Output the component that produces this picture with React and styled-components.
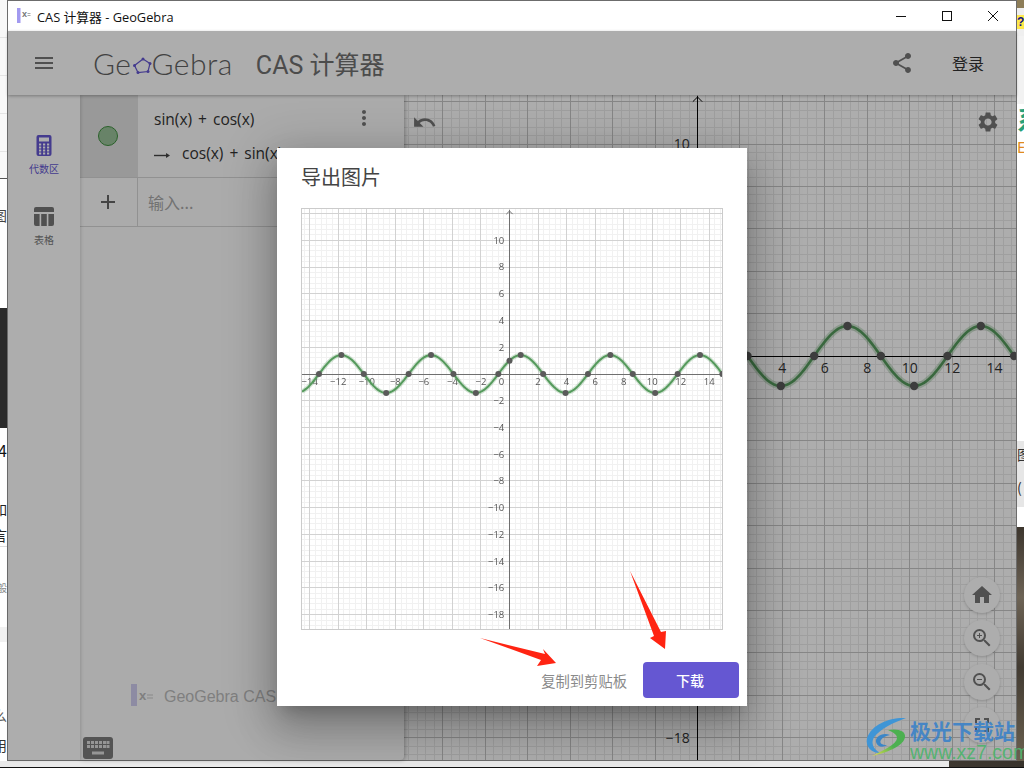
import React from "react";
import styled, { createGlobalStyle } from "styled-components";
import {
  MdAdd,
  MdFullscreen,
  MdHome,
  MdMenu,
  MdMoreVert,
  MdSettings,
  MdShare,
  MdUndo,
  MdZoomIn,
  MdZoomOut,
} from "react-icons/md";

const UI_FONT = `"Open Sans", "Noto Sans CJK SC", sans-serif`;
const CJK_FONT = `"Noto Sans CJK SC", "Open Sans", sans-serif`;

const GlobalStyle = createGlobalStyle`
  html, body {
    margin: 0;
    width: 1024px;
    height: 768px;
    overflow: hidden;
    background: #fff;
    font-family: ${UI_FONT};
  }
  * { box-sizing: border-box; }
`;

const Page = styled.div`
  position: relative;
  width: 1024px;
  height: 768px;
  display: grid;
  grid-template-columns: 7px 1010px 7px;
  grid-template-rows: 761px 7px;
`;

/* what is left of the desktop round the window */
const Strip = styled.div`
  display: flex;
  flex-direction: column;
  overflow: hidden;
  background: #fff;
`;

const StripRow = styled.div`
  flex: ${(p) => (p.$h ? `0 0 ${p.$h}px` : "1")};
  display: flex;
  align-items: center;
  justify-content: ${(p) => (p.$start ? "flex-start" : "flex-end")};
  overflow: hidden;
  white-space: nowrap;
  font-family: ${CJK_FONT};
  font-size: ${(p) => p.$size || 14}px;
  font-weight: ${(p) => p.$weight || 400};
  color: ${(p) => p.$color || "#222"};
  background: ${(p) => p.$bg || "transparent"};
`;

const HelpGlyph = styled.span`
  width: 7px;
  height: 14px;
  background: #ffe94a;
  color: #11118a;
  font: bold 12px/14px "Liberation Sans", sans-serif;
`;

const BottomStrip = styled.div`
  grid-column: 1 / 4;
  display: flex;
  border-bottom: 1px solid #111;
  background: linear-gradient(90deg, #2d2a26, #5c5347 60%, #38332c);
`;

const BottomBar = styled.div`
  width: 949px;
  background: #e9e9e9;
`;

const AppWindow = styled.div`
  display: flex;
  flex-direction: column;
  border: 1px solid #6c6c6c;
  background: #fff;
`;

const TitleBar = styled.div`
  flex: 0 0 30px;
  display: flex;
  align-items: center;
  padding-left: 9px;
  font-family: ${UI_FONT};
  font-size: 12.8px;
  color: #111;
`;

const TitleIcon = styled.svg`
  width: 15px;
  height: 16px;
  margin-right: 5px;
`;

const WindowButtons = styled.div`
  margin-left: auto;
  display: flex;
`;

const WindowButton = styled.svg`
  width: 46px;
  height: 30px;
`;

const AppArea = styled.div`
  position: relative;
  flex: 1;
  display: flex;
  flex-direction: column;
  min-height: 0;
`;

const Header = styled.header`
  position: relative;
  z-index: 3;
  flex: 0 0 64px;
  display: flex;
  align-items: center;
  padding: 0 32px 0 24px;
  background: #fff;
  color: #666;
  box-shadow: 0 1px 3px rgba(0, 0, 0, 0.3);
`;

const Logo = styled.div`
  display: flex;
  align-items: center;
  margin-left: 37px;
  font-family: Lato, "Open Sans", sans-serif;
  font-weight: 300;
  font-size: 30px;
  letter-spacing: 0.5px;
  color: #626262;
`;

const LogoMark = styled.svg`
  width: 20px;
  height: 20px;
  margin: 6px 0 0 0;
`;

const AppName = styled.div`
  margin-left: 23px;
  font-family: Roboto, ${CJK_FONT};
  font-size: 25px;
  color: #707070;
`;

const Login = styled.div`
  margin-left: 38px;
  font-family: ${CJK_FONT};
  font-size: 16px;
  color: #333;
`;

const ShareWrap = styled.div`
  margin-left: auto;
  display: flex;
  color: #777;
`;

const Body = styled.div`
  flex: 1;
  display: flex;
  min-height: 0;
`;

const Sidebar = styled.nav`
  flex: 0 0 72px;
  display: flex;
  flex-direction: column;
  align-items: center;
  padding-top: 40px;
  gap: 31px;
  background: #fff;
  box-shadow: 1px 0 3px rgba(0, 0, 0, 0.15);
  z-index: 2;
`;

const SideTab = styled.div`
  display: flex;
  flex-direction: column;
  align-items: center;
  gap: ${(p) => (p.$active ? 6 : 7)}px;
  font-family: ${CJK_FONT};
  font-size: 10px;
  line-height: 14px;
  color: ${(p) => (p.$active ? "#6557d2" : "#7a7a7a")};
`;

const Panel = styled.section`
  position: relative;
  z-index: 1;
  flex: 0 0 324px;
  display: flex;
  flex-direction: column;
  background: #fcfcfc;
  box-shadow: 1px 0 4px rgba(0, 0, 0, 0.3);
  border-bottom-right-radius: 4px;
`;

const Row = styled.div`
  flex: 0 0 ${(p) => p.$h}px;
  display: flex;
  border-bottom: 1px solid #d6d6d6;
`;

const MarbleCell = styled.div`
  flex: 0 0 58px;
  display: flex;
  align-items: center;
  justify-content: center;
  padding-right: 2px;
  background: ${(p) => (p.$active ? "#e2e2e2" : "transparent")};
  border-right: ${(p) => (p.$active ? "none" : "1px solid #d6d6d6")};
  color: #666;
`;

const Marble = styled.div`
  width: 20px;
  height: 20px;
  border-radius: 50%;
  background: #9ac29a;
  border: 1px solid #3f8f3f;
`;

const Formula = styled.div`
  flex: 1;
  padding: 12px 28px 0 16px;
  display: flex;
  flex-direction: column;
  gap: 10px;
`;

const FormulaLine = styled.div`
  height: 24px;
  display: flex;
  align-items: center;
  white-space: pre;
  font-family: "Open Sans", sans-serif;
  font-size: 15.5px;
  word-spacing: 2px;
  color: #333;
`;

const KebabWrap = styled.div`
  margin-left: auto;
  display: flex;
  color: #777;
  margin-top: -2px;
`;

const OutputArrow = styled.svg`
  width: 18px;
  height: 10px;
  margin: 4px 10px 0 0;
`;

const InputHint = styled.div`
  flex: 1;
  display: flex;
  align-items: center;
  padding-left: 10px;
  font-family: ${CJK_FONT};
  font-size: 16px;
  color: #a8a8a8;
`;

const Credit = styled.div`
  margin-top: auto;
  margin-bottom: 53px;
  padding-left: 51px;
  display: flex;
  align-items: center;
  white-space: nowrap;
  font-family: "Liberation Sans", ${CJK_FONT};
  font-size: 16px;
  color: #bcbcbc;
`;

const CreditIcon = styled.svg`
  width: 24px;
  height: 22px;
  margin-right: 9px;
`;

const KeyboardButton = styled.svg`
  position: absolute;
  left: 3px;
  bottom: 1px;
  width: 30px;
  height: 22px;
`;

const GraphArea = styled.div`
  position: relative;
  flex: 1;
  min-width: 0;
  background: #fff;
  overflow: hidden;
`;

const GraphSvg = styled.svg`
  display: block;
  filter: ${(p) => (p.$soft ? "blur(0.55px)" : "none")};
`;

const GraphTool = styled.div`
  position: absolute;
  display: flex;
  color: #777;
  ${(p) => p.$place}
`;

const ZoomStack = styled.div`
  position: absolute;
  right: 16px;
  bottom: 17px;
  display: flex;
  flex-direction: column;
  gap: 7.5px;
`;

const ZoomButton = styled.div`
  width: 36px;
  height: 36px;
  border-radius: 50%;
  background: #fff;
  color: #777;
  display: flex;
  align-items: center;
  justify-content: center;
  box-shadow: 0 1px 3px rgba(0, 0, 0, 0.2);
`;

const Scrim = styled.div`
  position: absolute;
  inset: 0;
  z-index: 5;
  display: flex;
  justify-content: center;
  align-items: flex-start;
  padding-top: 117px;
  background: rgba(0, 0, 0, 0.32);
`;

const Dialog = styled.div`
  position: relative;
  width: 470px;
  height: 558px;
  padding: 15px 24px 8px;
  background: #fff;
  box-shadow: 0 11px 15px -7px rgba(0, 0, 0, 0.2), 0 24px 38px 3px rgba(0, 0, 0, 0.16),
    0 9px 46px 8px rgba(0, 0, 0, 0.18);
`;

const DialogTitle = styled.h2`
  margin: 0 0 17px;
  height: 28px;
  font-family: ${CJK_FONT};
  font-size: 20px;
  line-height: 28px;
  font-weight: 400;
  color: #444;
`;

const ExportImage = styled.div`
  width: 422px;
  height: 422px;
  border: 1px solid #cbcbcb;
  overflow: hidden;
`;

const DialogActions = styled.div`
  margin: 32px -16px 0 0;
  display: flex;
  justify-content: flex-end;
  align-items: center;
  gap: 16px;
  font-family: ${CJK_FONT};
  font-size: 14px;
`;

const TextAction = styled.span`
  color: #8a8a8a;
  font-size: 14.3px;
`;

const PrimaryAction = styled.span`
  width: 96px;
  height: 36px;
  display: flex;
  align-items: center;
  justify-content: center;
  padding-right: 2px;
  border-radius: 4px;
  background: #6557d2;
  color: #fff;
  font-weight: 500;
`;

const Arrows = styled.svg`
  position: absolute;
  left: 203px;
  top: 423px;
  width: 190px;
  height: 100px;
  overflow: visible;
`;

const Watermark = styled.div`
  position: absolute;
  z-index: 9;
  left: 864px;
  top: 716px;
  display: flex;
  gap: 2px;
`;

const SwirlMark = styled.svg`
  width: 44px;
  height: 42px;
`;

const WatermarkText = styled.div`
  display: flex;
  flex-direction: column;
`;

const WatermarkTitle = styled.div`
  font-family: ${CJK_FONT};
  font-size: 21px;
  line-height: 28px;
  font-weight: 700;
  color: rgba(60, 130, 200, 0.92);
`;

const WatermarkUrl = styled.div`
  font-family: "Liberation Sans", sans-serif;
  font-size: 19.5px;
  line-height: 17px;
  color: rgba(80, 180, 110, 0.95);
`;

const LEFT_ROWS = [
  { h: 178, bg: "repeating-linear-gradient(180deg, #f8f8f8 0 37px, #e4e4e4 37px 38px)" },
  { h: 1, bg: "#555" },
  { h: 25 },
  { h: 22, text: "图", color: "#444" },
  { h: 82 },
  { h: 120, bg: "#2a2a2a" },
  { h: 10 },
  { h: 24, text: "4", size: 16, color: "#111" },
  { h: 36 },
  { h: 22, text: "如" },
  { h: 4 },
  { h: 22, text: "言" },
  { h: 1, bg: "#ddd" },
  { h: 32 },
  { h: 16, text: "般", size: 10, color: "#888" },
  { h: 32 },
  { h: 15, bg: "#f1f1f1" },
  { h: 62 },
  { h: 22, text: "么", color: "#555" },
  { h: 8 },
  { h: 22, text: "用", color: "#333" },
  {},
];

const RIGHT_ROWS = [
  { h: 8, bg: "#8d7d58" },
  { h: 28, bg: "#efefef", start: true, help: true },
  { h: 68, bg: "#f2f2f2" },
  { h: 28, start: true, text: "系", size: 26, weight: 700, color: "#28a17a" },
  { h: 6 },
  { h: 16, start: true, text: "E", size: 15, color: "#e08a20" },
  { h: 287 },
  { h: 26, bg: "#e6e6e6", start: true, text: "图", color: "#333" },
  { h: 10, bg: "#e6e6e6" },
  { h: 20, bg: "#e6e6e6", start: true, text: "(", color: "#333" },
  { h: 10, bg: "#e6e6e6" },
  { h: 20 },
  { bg: "linear-gradient(180deg, #3d362e, #6d6355 30%, #423b32 60%, #6a604f)" },
];

const CRITICAL = [];
for (let k = -6; k <= 5; k++) {
  CRITICAL.push({ x: -Math.PI / 4 + k * Math.PI, y: 0 });
  CRITICAL.push({ x: Math.PI / 4 + k * Math.PI, y: k % 2 === 0 ? Math.SQRT2 : -Math.SQRT2 });
}

const range = (from, to, step) => {
  const out = [];
  for (let v = from; v <= to + 1e-6; v += step) out.push(Math.round(v * 10) / 10);
  return out;
};

const minus = (n) => (n < 0 ? `\u2212${-n}` : `${n}`);

// one coordinate plane with sin(x) + cos(x) on it, used for the view and for the exported picture
function Plane({
  width, height, x0, y0, ux, uy, font, labelDy, dot, line, halo, core, minor, major, axis, text, soft, xLabels, yLabels, originLabel,
}) {
  const px = (x) => x0 + x * ux;
  const py = (y) => y0 - y * uy;
  const snap = (v) => Math.round(v - 0.5) + 0.5;
  const xs = range(-16, 16, 0.4).filter((v) => px(v) >= 0 && px(v) <= width);
  const ys = range(-22, 16, 0.4).filter((v) => py(v) >= 0 && py(v) <= height);
  const isMajor = (v) => Math.abs(v / 2 - Math.round(v / 2)) < 1e-6;

  let curve = "";
  for (let sx = 0; sx <= width; sx += 2) {
    const x = (sx - x0) / ux;
    curve += `${curve ? "L" : "M"}${sx} ${py(Math.sin(x) + Math.cos(x)).toFixed(2)}`;
  }

  return (
    <GraphSvg $soft={soft} width={width} height={height} viewBox={`0 0 ${width} ${height}`}>
      {xs.filter((v) => !isMajor(v)).map((v) => (
        <line key={`xm${v}`} x1={snap(px(v))} x2={snap(px(v))} y1="0" y2={height} stroke={minor} />
      ))}
      {ys.filter((v) => !isMajor(v)).map((v) => (
        <line key={`ym${v}`} y1={snap(py(v))} y2={snap(py(v))} x1="0" x2={width} stroke={minor} />
      ))}
      {xs.filter(isMajor).map((v) => (
        <line key={`xM${v}`} x1={snap(px(v))} x2={snap(px(v))} y1="0" y2={height} stroke={major} />
      ))}
      {ys.filter(isMajor).map((v) => (
        <line key={`yM${v}`} y1={snap(py(v))} y2={snap(py(v))} x1="0" x2={width} stroke={major} />
      ))}
      <line x1={snap(x0)} x2={snap(x0)} y1="1" y2={height} stroke={axis} />
      <line y1={snap(y0)} y2={snap(y0)} x1="0" x2={width} stroke={axis} />
      <path
        d={`M${snap(x0) - font / 3} ${font / 3 + 2}L${snap(x0)} 2L${snap(x0) + font / 3} ${font / 3 + 2}`}
        fill="none"
        stroke={axis}
      />
      <g fontFamily='"Open Sans", sans-serif' fontSize={font} fill={text}>
        {xLabels.map((v) => (
          <text key={`tx${v}`} x={px(v)} y={y0 + labelDy} textAnchor="middle">
            {minus(v)}
          </text>
        ))}
        {yLabels.map((v) => (
          <text key={`ty${v}`} x={x0 - font * 0.55} y={py(v) + font * 0.36} textAnchor="end">
            {minus(v)}
          </text>
        ))}
        {originLabel && (
          <text x={x0 - font * 0.55} y={y0 + labelDy} textAnchor="end">
            0
          </text>
        )}
      </g>
      <path d={curve} fill="none" stroke={line} strokeOpacity="0.28" strokeWidth={halo} />
      <path d={curve} fill="none" stroke={line} strokeWidth={core} />
      {[...CRITICAL, { x: 0, y: 1 }].map((p, i) => (
        <circle key={i} cx={px(p.x)} cy={py(p.y)} r={dot} fill="#5a5a5a" />
      ))}
    </GraphSvg>
  );
}

function WindowControls() {
  return (
    <WindowButtons>
      <WindowButton viewBox="0 0 46 30">
        <path d="M18 15.5h10" stroke="#111" />
      </WindowButton>
      <WindowButton viewBox="0 0 46 30">
        <rect x="18.5" y="10.5" width="9" height="9" fill="none" stroke="#111" />
      </WindowButton>
      <WindowButton viewBox="0 0 46 30">
        <path d="M18 10l10 10M28 10l-10 10" stroke="#111" />
      </WindowButton>
    </WindowButtons>
  );
}

function CalculatorIcon() {
  return (
    <svg width="16" height="21" viewBox="0 0 16 21">
      <rect x="0.5" width="15" height="21" rx="2" fill="#6557d2" />
      <rect x="3" y="2.5" width="10" height="4" fill="#fff" />
      {[9, 12, 15, 18].flatMap((y) =>
        [3, 7, 11].map((x) => <rect key={`${x}-${y}`} x={x} y={y - 0.5} width="2.2" height="2" fill="#fff" />)
      )}
    </svg>
  );
}

function TableIcon() {
  return (
    <svg width="20" height="19" viewBox="0 0 20 19">
      <path d="M2 0h16a2 2 0 0 1 2 2v3H0V2a2 2 0 0 1 2-2z" fill="#777" />
      <path d="M0 7h5.6v12H2a2 2 0 0 1-2-2zM7.2 7h5.6v12H7.2zM14.4 7H20v10a2 2 0 0 1-2 2h-3.6z" fill="#777" />
    </svg>
  );
}

function KeyboardIcon() {
  return (
    <KeyboardButton viewBox="0 0 30 22">
      <rect width="30" height="22" rx="3" fill="#7c7c7c" />
      {[4, 8].flatMap((y) =>
        [4, 8, 12, 16, 20, 23.5].map((x) => <rect key={`${x}-${y}`} x={x} y={y} width="3" height="3" fill="#ddd" />)
      )}
      <rect x="9" y="14.5" width="12" height="3" fill="#ddd" />
    </KeyboardButton>
  );
}

export default function App() {
  return (
    <Page>
      <GlobalStyle />
      <Strip>
        {LEFT_ROWS.map((r, i) => (
          <StripRow key={i} $h={r.h} $bg={r.bg} $size={r.size} $color={r.color}>
            {r.text}
          </StripRow>
        ))}
      </Strip>

      <AppWindow>
        <TitleBar>
          <TitleIcon viewBox="0 0 15 16">
            <rect width="3.5" height="15" fill="#a29af0" />
            <text x="5" y="9" fontFamily='"Liberation Sans", sans-serif' fontSize="9" fontWeight="700" fill="#777">
              x
            </text>
            <path d="M10.5 5.5h3M10.5 7.5h3" stroke="#aaa" />
          </TitleIcon>
          CAS 计算器 - GeoGebra
          <WindowControls />
        </TitleBar>

        <AppArea>
          <Header>
            <MdMenu size={24} color="#777" />
            <Logo>
              Ge
              <LogoMark viewBox="0 0 20 20">
                <path d="M11 3L18 7.5L16 15.5L6 16.5L2.5 9.5z" fill="none" stroke="#6557d2" strokeWidth="1.2" />
                {[[11, 3], [18, 7.5], [16, 15.5], [6, 16.5], [2.5, 9.5]].map(([cx, cy]) => (
                  <circle key={cx} cx={cx} cy={cy} r="1.5" fill="#6557d2" />
                ))}
              </LogoMark>
              Gebra
            </Logo>
            <AppName>CAS 计算器</AppName>
            <ShareWrap>
              <MdShare size={24} />
            </ShareWrap>
            <Login>登录</Login>
          </Header>

          <Body>
            <Sidebar>
              <SideTab $active>
                <CalculatorIcon />
                代数区
              </SideTab>
              <SideTab>
                <TableIcon />
                表格
              </SideTab>
            </Sidebar>

            <Panel>
              <Row $h={83}>
                <MarbleCell $active>
                  <Marble />
                </MarbleCell>
                <Formula>
                  <FormulaLine>
                    sin(x) + cos(x)
                    <KebabWrap>
                      <MdMoreVert size={24} />
                    </KebabWrap>
                  </FormulaLine>
                  <FormulaLine>
                    <OutputArrow viewBox="0 0 18 10">
                      <path d="M0 5.5h14" stroke="#444" strokeWidth="1.4" />
                      <path d="M12 3l4 2.5-4 2.5z" fill="#444" />
                    </OutputArrow>
                    cos(x) + sin(x)
                  </FormulaLine>
                </Formula>
              </Row>
              <Row $h={49}>
                <MarbleCell>
                  <MdAdd size={24} />
                </MarbleCell>
                <InputHint>输入...</InputHint>
              </Row>
              <Credit>
                <CreditIcon viewBox="0 0 24 22">
                  <rect width="6" height="22" fill="#d0cdf0" />
                  <text x="8" y="16" fontFamily='"Liberation Sans", sans-serif' fontSize="13" fontWeight="700" fill="#bbb">
                    x
                  </text>
                  <path d="M16 11h6M16 14h6" stroke="#ccc" />
                </CreditIcon>
                GeoGebra CAS 计算器
              </Credit>
              <KeyboardIcon />
            </Panel>

            <GraphArea>
              <Plane
                width={612}
                height={665}
                x0={293.5}
                y0={261}
                ux={21.22}
                uy={21.2}
                font={14}
                labelDy={17}
                dot={4.2}
                halo={6.5}
                core={2.6}
                line="#559a5c"
                minor="#ebebeb"
                major="#c6c6c6"
                axis="#000"
                text="#333"
                xLabels={[4, 6, 8, 10, 12, 14]}
                yLabels={[10, -18]}
              />
              <GraphTool $place="left: 8px; top: 15px;">
                <MdUndo size={25} />
              </GraphTool>
              <GraphTool $place="right: 16px; top: 15px;">
                <MdSettings size={24} />
              </GraphTool>
              <ZoomStack>
                <ZoomButton>
                  <MdHome size={24} />
                </ZoomButton>
                <ZoomButton>
                  <MdZoomIn size={24} />
                </ZoomButton>
                <ZoomButton>
                  <MdZoomOut size={24} />
                </ZoomButton>
                <ZoomButton>
                  <MdFullscreen size={24} />
                </ZoomButton>
              </ZoomStack>
            </GraphArea>
          </Body>

          <Scrim>
            <Dialog>
              <DialogTitle>导出图片</DialogTitle>
              <ExportImage>
                <Plane
                  soft
                  width={420}
                  height={420}
                  x0={207.5}
                  y0={165}
                  ux={14.27}
                  uy={13.37}
                  font={9.5}
                  labelDy={11}
                  dot={3}
                  halo={4.4}
                  core={2}
                  line="#559a5c"
                  minor="#f1f1f1"
                  major="#d2d2d2"
                  axis="#6f6f6f"
                  text="#555"
                  originLabel
                  xLabels={[-14, -12, -10, -8, -6, -4, -2, 2, 4, 6, 8, 10, 12, 14]}
                  yLabels={[10, 8, 6, 4, 2, -2, -4, -6, -8, -10, -12, -14, -16, -18]}
                />
              </ExportImage>
              <DialogActions>
                <TextAction>复制到剪贴板</TextAction>
                <PrimaryAction>下载</PrimaryAction>
              </DialogActions>
              <Arrows viewBox="480 571 190 100">
                <path d="M480 638L545 654L543 649L556 663L537 666L541 660z" fill="#ff2412" />
                <path d="M630 571L661 632L666 631L665 649L650 638L654 636z" fill="#ff2412" />
              </Arrows>
            </Dialog>
          </Scrim>
        </AppArea>
      </AppWindow>

      <Strip>
        {RIGHT_ROWS.map((r, i) => (
          <StripRow key={i} $h={r.h} $bg={r.bg} $size={r.size} $color={r.color} $weight={r.weight} $start={r.start}>
            {r.help ? <HelpGlyph>?</HelpGlyph> : r.text}
          </StripRow>
        ))}
      </Strip>

      <BottomStrip>
        <BottomBar />
      </BottomStrip>

      <Watermark>
        <SwirlMark viewBox="0 0 44 42">
          <defs>
            <linearGradient id="swirlGreen" x1="1" y1="0" x2="0" y2="1">
              <stop offset="0.5" stopColor="#4cb050" />
              <stop offset="1" stopColor="#e4e04a" />
            </linearGradient>
          </defs>
          <path d="M42 2C26 1 8 8 3 22C1 31 8 37 16 37C9 33 6 26 11 20C17 13 28 7 42 2z" fill="#3f95d6" />
          <path d="M26 19C18 16 11 21 12 26C13 31 19 32 23 29C18 29 15 27 17 24C19 21 22 20 26 19z" fill="#3a86c8" />
          <path d="M24 14C34 12 42 15 41 21C40 29 26 36 8 40C20 34 33 28 33 22C33 18 28 16 24 14z" fill="url(#swirlGreen)" />
        </SwirlMark>
        <WatermarkText>
          <WatermarkTitle>极光下载站</WatermarkTitle>
          <WatermarkUrl>www.xz7.com</WatermarkUrl>
        </WatermarkText>
      </Watermark>
    </Page>
  );
}
